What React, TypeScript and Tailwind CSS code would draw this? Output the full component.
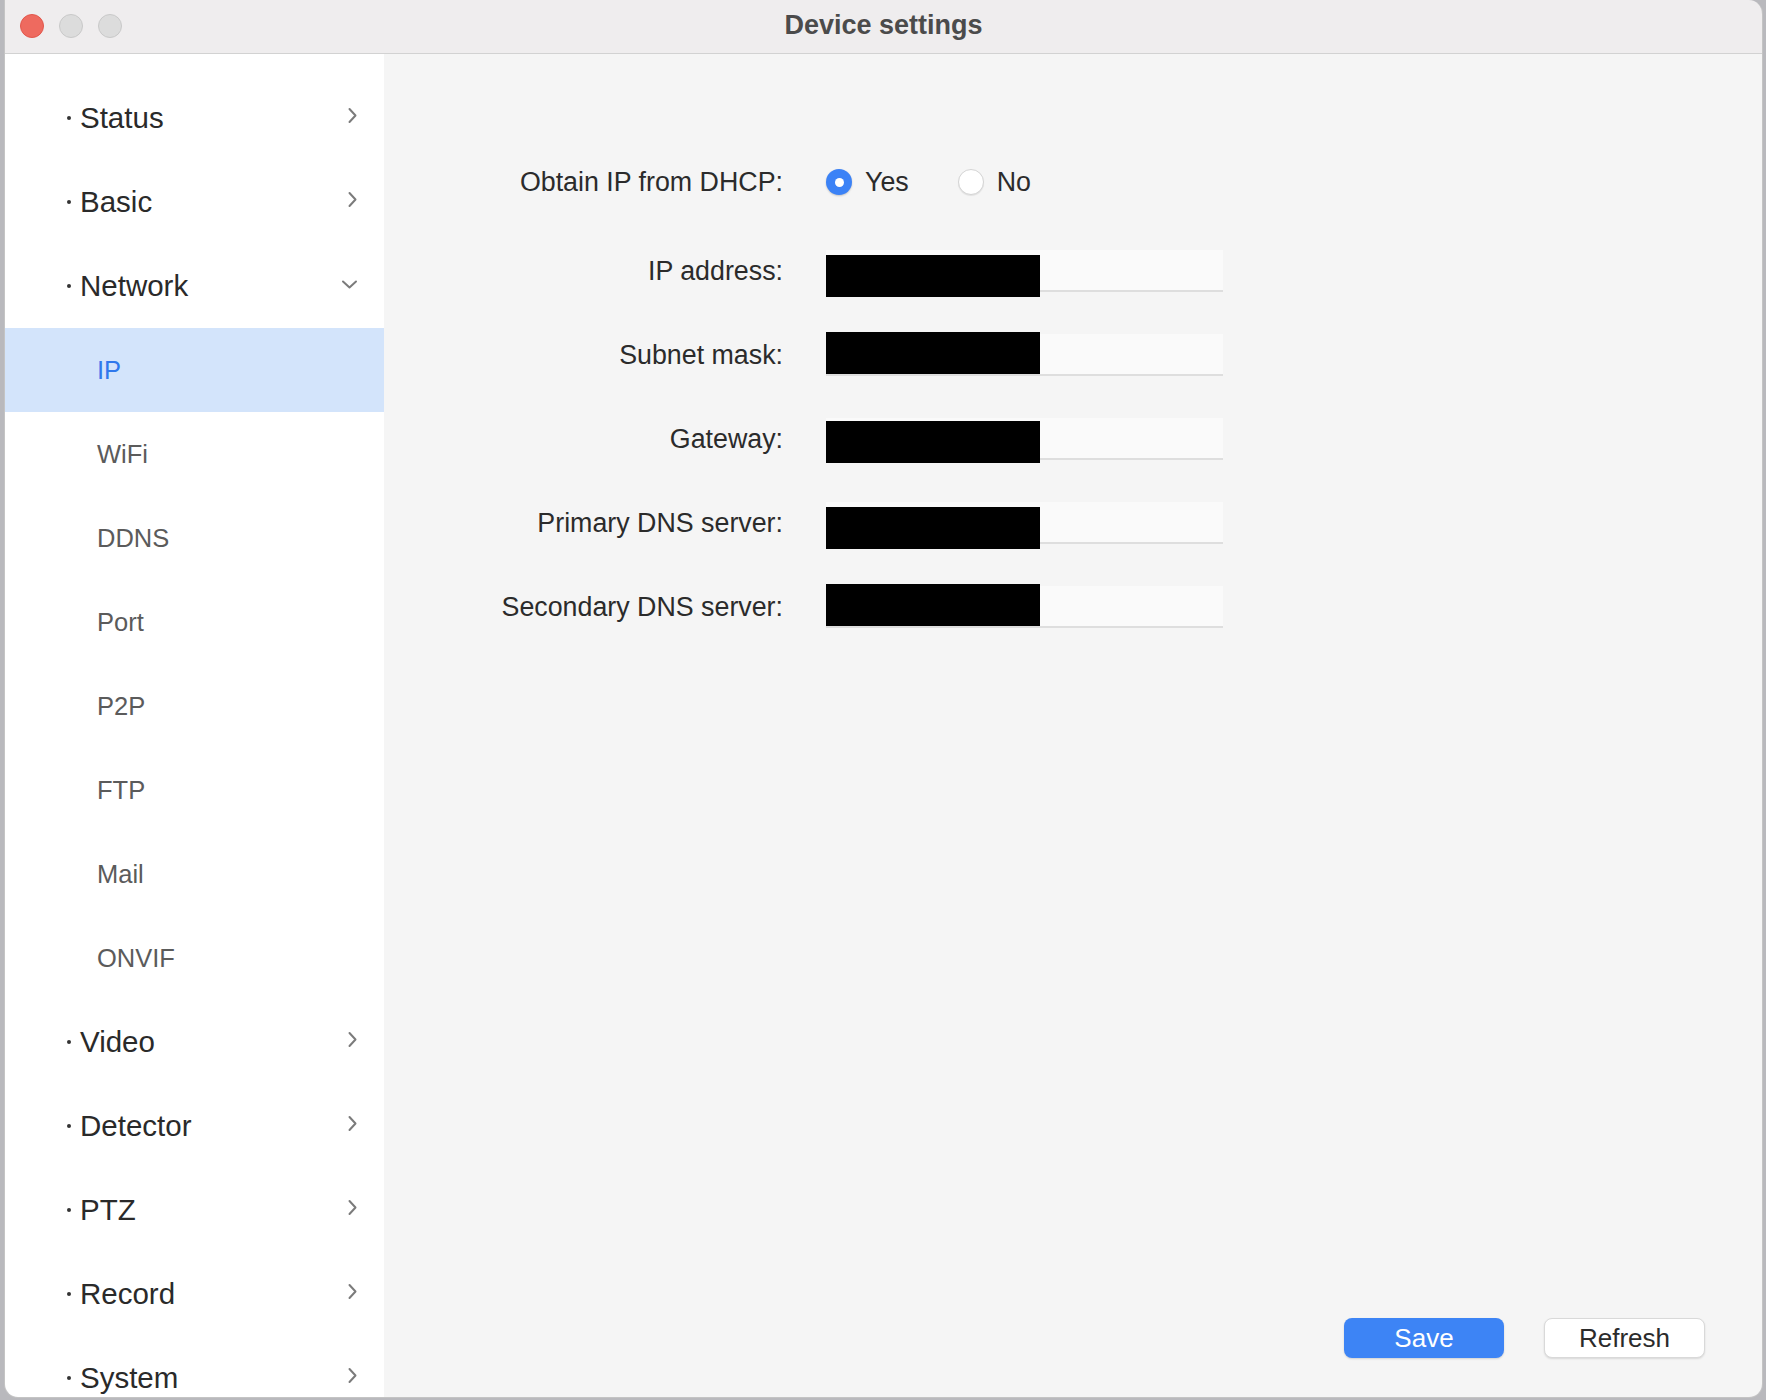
import React from "react";

type NavItem = { label: string; kind: "parent" | "child"; open?: boolean; active?: boolean };

const nav: NavItem[] = [
  { label: "Status", kind: "parent" },
  { label: "Basic", kind: "parent" },
  { label: "Network", kind: "parent", open: true },
  { label: "IP", kind: "child", active: true },
  { label: "WiFi", kind: "child" },
  { label: "DDNS", kind: "child" },
  { label: "Port", kind: "child" },
  { label: "P2P", kind: "child" },
  { label: "FTP", kind: "child" },
  { label: "Mail", kind: "child" },
  { label: "ONVIF", kind: "child" },
  { label: "Video", kind: "parent" },
  { label: "Detector", kind: "parent" },
  { label: "PTZ", kind: "parent" },
  { label: "Record", kind: "parent" },
  { label: "System", kind: "parent" },
];

// redaction blocks sit a little off the field in the original capture
const fields = [
  { label: "IP address:", mask: "top-[5px]" },
  { label: "Subnet mask:", mask: "top-[-2px]" },
  { label: "Gateway:", mask: "top-[3px]" },
  { label: "Primary DNS server:", mask: "top-[5px]" },
  { label: "Secondary DNS server:", mask: "top-[-2px]" },
];

function ChevronRight() {
  return (
    <svg width="11" height="17" viewBox="0 0 11 17" fill="none" className="mb-[5px]">
      <path d="M2.5 2l6 6.5-6 6.5" stroke="#7b7b7b" strokeWidth="2" strokeLinecap="round" strokeLinejoin="round" />
    </svg>
  );
}

function ChevronDown() {
  return (
    <svg width="17" height="11" viewBox="0 0 17 11" fill="none" className="mb-[3px]">
      <path d="M2 2.5l6.5 6 6.5-6" stroke="#7b7b7b" strokeWidth="2" strokeLinecap="round" strokeLinejoin="round" />
    </svg>
  );
}

function Radio({ checked, label }: { checked?: boolean; label: string }) {
  return (
    <label className="flex items-center gap-[13px]">
      {checked ? (
        <span className="flex h-[26px] w-[26px] items-center justify-center rounded-full bg-[#3b82f6] shadow-[0_1px_2px_rgba(0,0,0,0.2)]">
          <span className="h-[9px] w-[9px] rounded-full bg-white" />
        </span>
      ) : (
        <span className="h-[26px] w-[26px] rounded-full border border-[#d4d4d4] bg-white shadow-[0_1px_1px_rgba(0,0,0,0.08)]" />
      )}
      <span>{label}</span>
    </label>
  );
}

export default function App() {
  return (
    <div className="flex h-[1400px] w-[1766px] bg-[#b9b9bd] pb-[2px] pl-[4px] pr-[3px] font-['Liberation_Sans',Arial,sans-serif]">
      <div className="flex flex-1 flex-col overflow-hidden rounded-b-[14px] rounded-tr-[14px] border-l border-r border-b border-[#c4c4c4]">
        {/* title bar */}
        <div className="relative flex h-[54px] shrink-0 items-center justify-center border-b border-[#d2d2d2] bg-[#efedee] pb-[2px]">
          <div className="absolute left-[15px] top-[14px] flex gap-[15px]">
            <span className="h-[24px] w-[24px] rounded-full border border-[#e2574c] bg-[#ee6a5f]" />
            <span className="h-[24px] w-[24px] rounded-full border border-[#c9c9c9] bg-[#dcdcdc]" />
            <span className="h-[24px] w-[24px] rounded-full border border-[#c9c9c9] bg-[#dcdcdc]" />
          </div>
          <span className="text-[27px] font-bold text-[#4b4b4b]">Device settings</span>
        </div>

        <div className="flex flex-1 overflow-hidden">
          {/* sidebar */}
          <aside className="w-[379px] shrink-0 bg-white pt-[22px]">
            {nav.map((item) =>
              item.kind === "parent" ? (
                <div key={item.label} className="flex h-[84px] items-center pl-[62px] pr-[26px] text-[29.5px] text-[#2a2a2a]">
                  <span className="h-[4px] w-[4px] rounded-full bg-[#333]" />
                  <span className="ml-[9px] flex-1">{item.label}</span>
                  {item.open ? <ChevronDown /> : <ChevronRight />}
                </div>
              ) : (
                <div
                  key={item.label}
                  className={`flex h-[84px] items-center pl-[92px] text-[25.5px] ${
                    item.active ? "bg-[#d3e4fb] text-[#2f78ec]" : "text-[#5b5b5b]"
                  }`}
                >
                  {item.label}
                </div>
              )
            )}
          </aside>

          {/* content */}
          <main className="flex flex-1 flex-col bg-[#f5f5f5] text-[26.8px] text-[#2b2b2b]">
            <div className="pt-[86px]">
              <div className="grid grid-cols-[399px_auto] gap-x-[43px]">
                <div className="flex h-[84px] items-center justify-end">Obtain IP from DHCP:</div>
                <div className="flex h-[84px] items-center gap-[49px]">
                  <Radio checked label="Yes" />
                  <Radio label="No" />
                </div>
              </div>
              <div className="mt-[5px] grid grid-cols-[399px_auto] gap-x-[43px]">
                {fields.map((f) => (
                  <React.Fragment key={f.label}>
                    <div className="flex h-[84px] items-center justify-end">{f.label}</div>
                    <div className="flex h-[84px] items-center">
                      <div className="relative h-[42px] w-[397px] border-b-2 border-[#dedede] bg-[#fafafa]">
                        <div className={`absolute left-0 h-[42px] w-[214px] bg-black ${f.mask}`} />
                      </div>
                    </div>
                  </React.Fragment>
                ))}
              </div>
            </div>

            <div className="flex-1" />

            <div className="flex justify-end gap-[40px] pb-[39px] pr-[57px]">
              <button className="h-[40px] w-[160px] rounded-[8px] bg-[#3d84f5] text-[26px] text-white shadow-[0_1px_2px_rgba(0,0,0,0.15)]">
                Save
              </button>
              <button className="h-[40px] w-[161px] rounded-[8px] border border-[#d9d9d9] bg-white text-[26px] text-[#2b2b2b] shadow-[0_1px_2px_rgba(0,0,0,0.12)]">
                Refresh
              </button>
            </div>
          </main>
        </div>
      </div>
    </div>
  );
}
